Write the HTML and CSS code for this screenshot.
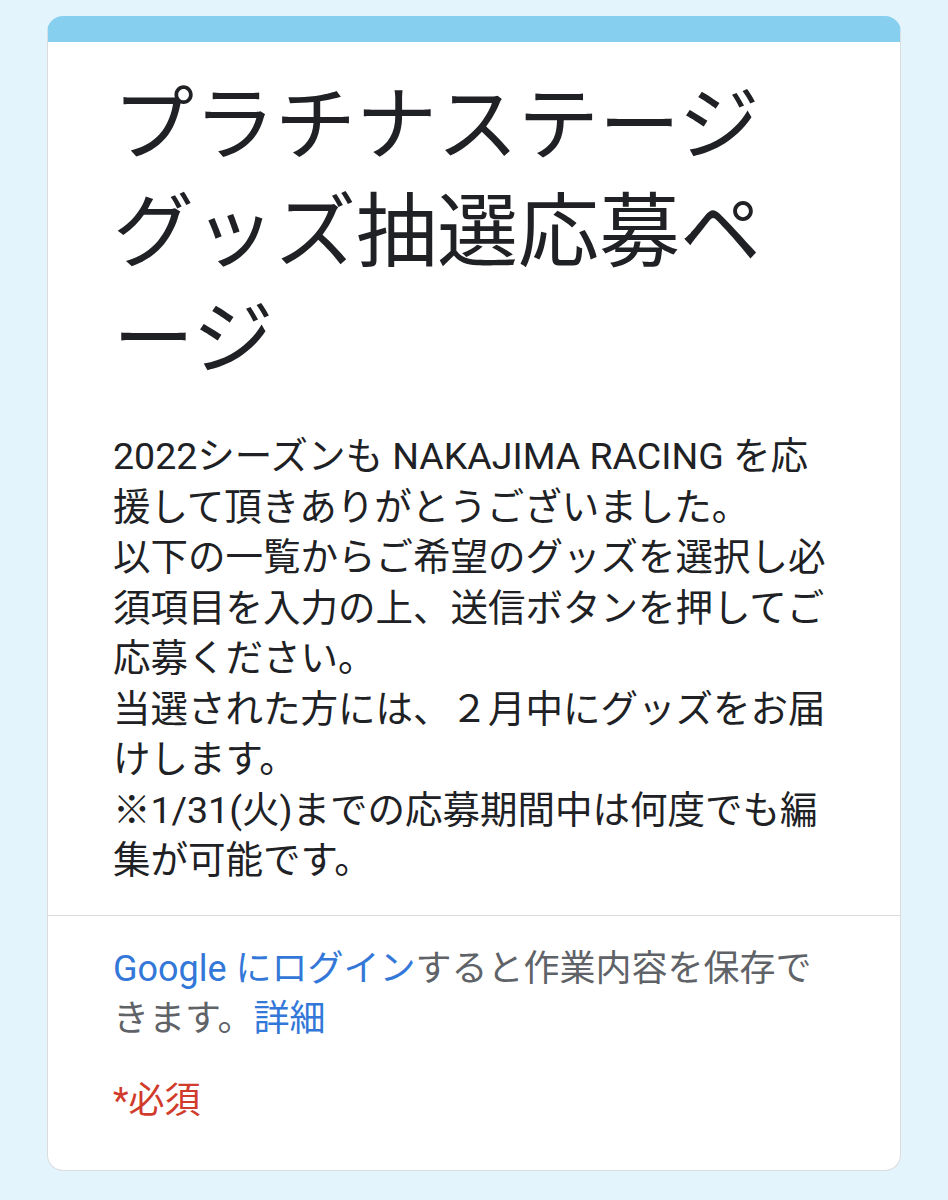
FILE: index.html
```html
<!DOCTYPE html>
<html lang="ja">
  <head>
    <meta charset="utf-8">
    <title>プラチナステージ グッズ抽選応募ページ</title>
    <link rel="stylesheet" href="styles.css">
  </head>
  <body>
    <div class="form-card">
      <div class="form-header">
        <h1 class="form-title">プラチナステージグッズ抽選応募ページ</h1>
        <div class="form-desc">
          2022シーズンも NAKAJIMA RACING を応援して頂きありがとうございました。<br>
          以下の一覧からご希望のグッズを選択し必須項目を入力の上、送信ボタンを押してご応募ください。<br>
          当選された方には、２月中にグッズをお届けします。<br>
          ※1/31(火)までの応募期間中は何度でも編集が可能です。
        </div>
      </div>

      <div class="form-footer">
        <div class="login-note">
          <a href="#" class="link">Google にログイン</a>すると作業内容を保存できます。<a href="#" class="link">詳細</a>
        </div>
        <div class="required">*必須</div>
      </div>
    </div>
  </body>
</html>
```

FILE: styles.css
```css
body {
  margin: 0;
  padding: 16px 47px 30px;
  background-color: #e4f4fc;
  font-family: Roboto, "Noto Sans CJK JP", sans-serif;
  color: #202124;
}
.form-card {
  background: white;
  border: 1px solid #dadce0;
  border-top: 26px solid #87cfef;
  border-radius: 16px;
}
.form-header {
  padding: 30px 65px 29px;
  border-bottom: 1px solid #dadce0;
}
.form-title {
  margin: 0;
  font-size: 81px;
  font-weight: 400;
  line-height: 107px;
}
.form-desc {
  margin-top: 38px;
  font-size: 37.5px;
  line-height: 50.5px;
}
.form-footer {
  padding: 28px 65px 44px;
  font-size: 36px;
  line-height: 50px;
  color: #5f6368;
}
.link {
  color: #3378d8;
  text-decoration: none;
}
.required {
  margin-top: 32px;
  color: #d13b2b;
}
```
